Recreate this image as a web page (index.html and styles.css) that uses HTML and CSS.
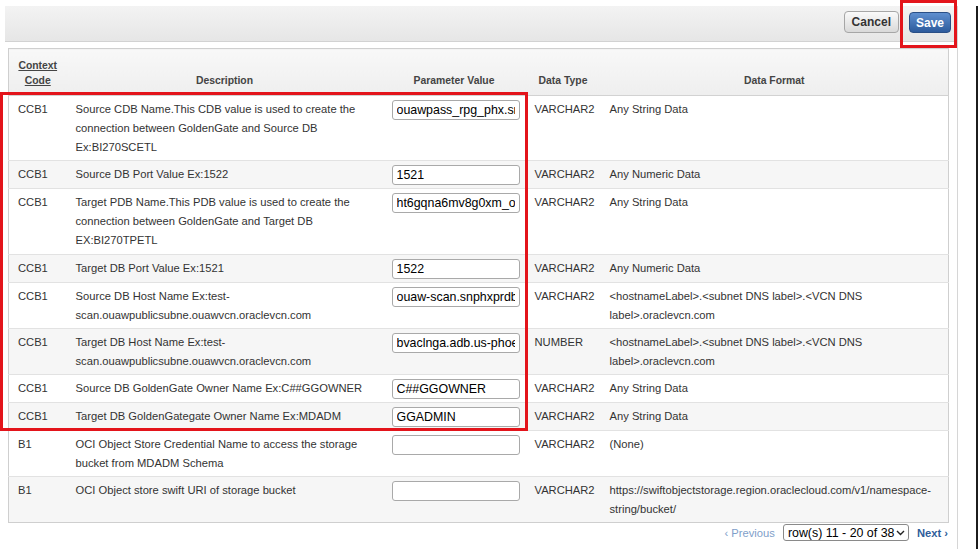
FILE: index.html
```html
<!DOCTYPE html>
<html lang="en">
<head>
<meta charset="utf-8">
<title>Parameters</title>
<link rel="stylesheet" href="styles.css">
</head>
<body>
<div class="page">
  <div class="main">
    <div class="toolbar">
      <button class="btn btn-cancel" type="button">Cancel</button>
      <button class="btn btn-save" type="button">Save</button>
    </div>
    <div class="panel">
      <table class="grid">
        <colgroup>
          <col class="w-code">
          <col class="w-desc">
          <col class="w-val">
          <col class="w-type">
          <col class="w-fmt">
        </colgroup>
        <thead>
          <tr>
            <th><span class="sort">Context<br>Code</span></th>
            <th>Description</th>
            <th>Parameter Value</th>
            <th>Data Type</th>
            <th>Data Format</th>
          </tr>
        </thead>
        <tbody>
          <tr>
            <td>CCB1</td>
            <td>Source CDB Name.This CDB value is used to create the connection between GoldenGate and Source DB Ex:BI270SCETL</td>
            <td><input class="field" type="text" value="ouawpass_rpg_phx.snphxprdb.oraclevcn.com"></td>
            <td>VARCHAR2</td>
            <td>Any String Data</td>
          </tr>
          <tr>
            <td>CCB1</td>
            <td>Source DB Port Value Ex:1522</td>
            <td><input class="field" type="text" value="1521"></td>
            <td>VARCHAR2</td>
            <td>Any Numeric Data</td>
          </tr>
          <tr class="tall">
            <td>CCB1</td>
            <td>Target PDB Name.This PDB value is used to create the connection between GoldenGate and Target DB EX:BI270TPETL</td>
            <td><input class="field" type="text" value="ht6gqna6mv8g0xm_ouawpdb"></td>
            <td>VARCHAR2</td>
            <td>Any String Data</td>
          </tr>
          <tr>
            <td>CCB1</td>
            <td>Target DB Port Value Ex:1521</td>
            <td><input class="field" type="text" value="1522"></td>
            <td>VARCHAR2</td>
            <td>Any Numeric Data</td>
          </tr>
          <tr>
            <td>CCB1</td>
            <td>Source DB Host Name Ex:test-scan.ouawpublicsubne.ouawvcn.oraclevcn.com</td>
            <td><input class="field" type="text" value="ouaw-scan.snphxprdb.oraclevcn.com"></td>
            <td>VARCHAR2</td>
            <td>&lt;hostnameLabel&gt;.&lt;subnet DNS label&gt;.&lt;VCN DNS label&gt;.oraclevcn.com</td>
          </tr>
          <tr>
            <td>CCB1</td>
            <td>Target DB Host Name Ex:test-scan.ouawpublicsubne.ouawvcn.oraclevcn.com</td>
            <td><input class="field" type="text" value="bvaclnga.adb.us-phoenix-1.oraclecloud.com"></td>
            <td>NUMBER</td>
            <td>&lt;hostnameLabel&gt;.&lt;subnet DNS label&gt;.&lt;VCN DNS label&gt;.oraclevcn.com</td>
          </tr>
          <tr>
            <td>CCB1</td>
            <td>Source DB GoldenGate Owner Name Ex:C##GGOWNER</td>
            <td><input class="field" type="text" value="C##GGOWNER"></td>
            <td>VARCHAR2</td>
            <td>Any String Data</td>
          </tr>
          <tr>
            <td>CCB1</td>
            <td>Target DB GoldenGategate Owner Name Ex:MDADM</td>
            <td><input class="field" type="text" value="GGADMIN"></td>
            <td>VARCHAR2</td>
            <td>Any String Data</td>
          </tr>
          <tr>
            <td>B1</td>
            <td>OCI Object Store Credential Name to access the storage bucket from MDADM Schema</td>
            <td><input class="field" type="text" value=""></td>
            <td>VARCHAR2</td>
            <td>(None)</td>
          </tr>
          <tr>
            <td>B1</td>
            <td>OCI Object store swift URI of storage bucket</td>
            <td><input class="field" type="text" value=""></td>
            <td>VARCHAR2</td>
            <td>https://swiftobjectstorage.region.oraclecloud.com/v1/namespace-string/bucket/</td>
          </tr>
        </tbody>
      </table>
      <div class="pager">
        <span class="prev">&#8249; Previous</span>
        <div class="select">
          <span>row(s) 11 - 20 of 38</span>
          <svg class="chev" width="9" height="6" viewBox="0 0 9 6"><path d="M1 1 L4.5 4.5 L8 1" fill="none" stroke="#222" stroke-width="1.4"/></svg>
        </div>
        <span class="next">Next &#8250;</span>
      </div>
    </div>
  </div>
  <div class="edge"></div>
  <div class="mark mark-rows"></div>
  <div class="mark mark-save"></div>
</div>
</body>
</html>
```

FILE: styles.css
```css
html, body {
  margin: 0;
  padding: 0;
  background: #ffffff;
}

body {
  font-family: "Liberation Sans", Arial, sans-serif;
  color: #333333;
}

.page {
  position: relative;
  display: flex;
  width: 979px;
  height: 549px;
  overflow: hidden;
}

.main {
  margin-left: 5px;
  margin-top: 6px;
  width: 953px;
  border-right: 1px solid #d6d6d6;
  box-sizing: border-box;
}

.toolbar {
  height: 36px;
  box-sizing: border-box;
  background: linear-gradient(#f3f3f3, #e6e6e6);
  border-bottom: 1px solid #d2d2d2;
  display: flex;
  justify-content: flex-end;
  align-items: flex-start;
  gap: 10px;
  padding: 5px 6px 0 0;
}

.btn {
  height: 22px;
  padding: 0 7px;
  border-radius: 4px;
  font-family: "Liberation Sans", Arial, sans-serif;
  font-size: 12px;
  font-weight: bold;
  cursor: pointer;
}

.btn-cancel {
  background: linear-gradient(#fafafa, #d9d9d9);
  border: 1px solid #a6a6a6;
  color: #333333;
}

.btn-save {
  margin-top: 1px;
  height: 21px;
  padding: 0 6px;
  background: linear-gradient(#5f8fcf, #2d5b9c);
  border: 1px solid #2a4f86;
  color: #ffffff;
}

.panel {
  padding: 6px 8px 0 3px;
}

.grid {
  width: 940px;
  table-layout: fixed;
  border-collapse: collapse;
  border: 1px solid #cfcfcf;
  font-size: 11.2px;
}

.w-code { width: 58px; }
.w-desc { width: 316px; }
.w-val { width: 143px; }
.w-type { width: 75px; }
.w-fmt { width: 348px; }

.grid th {
  background: linear-gradient(#f8f8f8, #eeeeee);
  border-bottom: 1px solid #d2d2d2;
  font-size: 10.4px;
  font-weight: bold;
  color: #444444;
  line-height: 15px;
  padding: 9px 4px 7px;
  vertical-align: bottom;
  text-align: center;
}

.sort {
  text-decoration: underline;
}

.grid td {
  padding: 4px 9px 3px;
  line-height: 19px;
  vertical-align: top;
  border-bottom: 1px solid #e2e2e2;
  color: #333333;
}

.grid tbody tr.tall td {
  padding-bottom: 4px;
}

.grid tbody tr:nth-child(even) td {
  background: #f6f6f6;
}

.grid tbody tr:last-child td {
  border-bottom: none;
}

.field {
  display: block;
  width: 128px;
  height: 20px;
  box-sizing: border-box;
  margin: 0;
  padding: 0 4px;
  border: 1px solid #a9a9a9;
  border-radius: 3px;
  background: #ffffff;
  font-family: "Liberation Sans", Arial, sans-serif;
  font-size: 12.4px;
  color: #000000;
}

.pager {
  display: flex;
  justify-content: flex-end;
  align-items: center;
  gap: 8px;
  margin-top: 1px;
  padding-right: 1px;
  font-size: 11.2px;
}

.prev {
  color: #7f9fca;
}

.next {
  color: #2e5c9a;
  font-weight: bold;
}

.select {
  display: flex;
  align-items: center;
  justify-content: space-between;
  height: 17px;
  box-sizing: border-box;
  width: 126px;
  padding: 0 3px 0 4px;
  border: 1px solid #8a8a8a;
  border-radius: 3px;
  font-size: 12.4px;
  color: #000000;
  white-space: nowrap;
}

.chev {
  flex: none;
}

.edge {
  margin-left: auto;
  margin-top: 6px;
  margin-right: 1px;
  width: 2px;
  background: #1c1c1c;
}

.mark {
  position: absolute;
  border: 3px solid #e3141b;
  box-sizing: border-box;
}

.mark-rows {
  left: 0;
  top: 92px;
  width: 528px;
  height: 339px;
}

.mark-save {
  left: 900px;
  top: 0;
  width: 57px;
  height: 48px;
}
```
